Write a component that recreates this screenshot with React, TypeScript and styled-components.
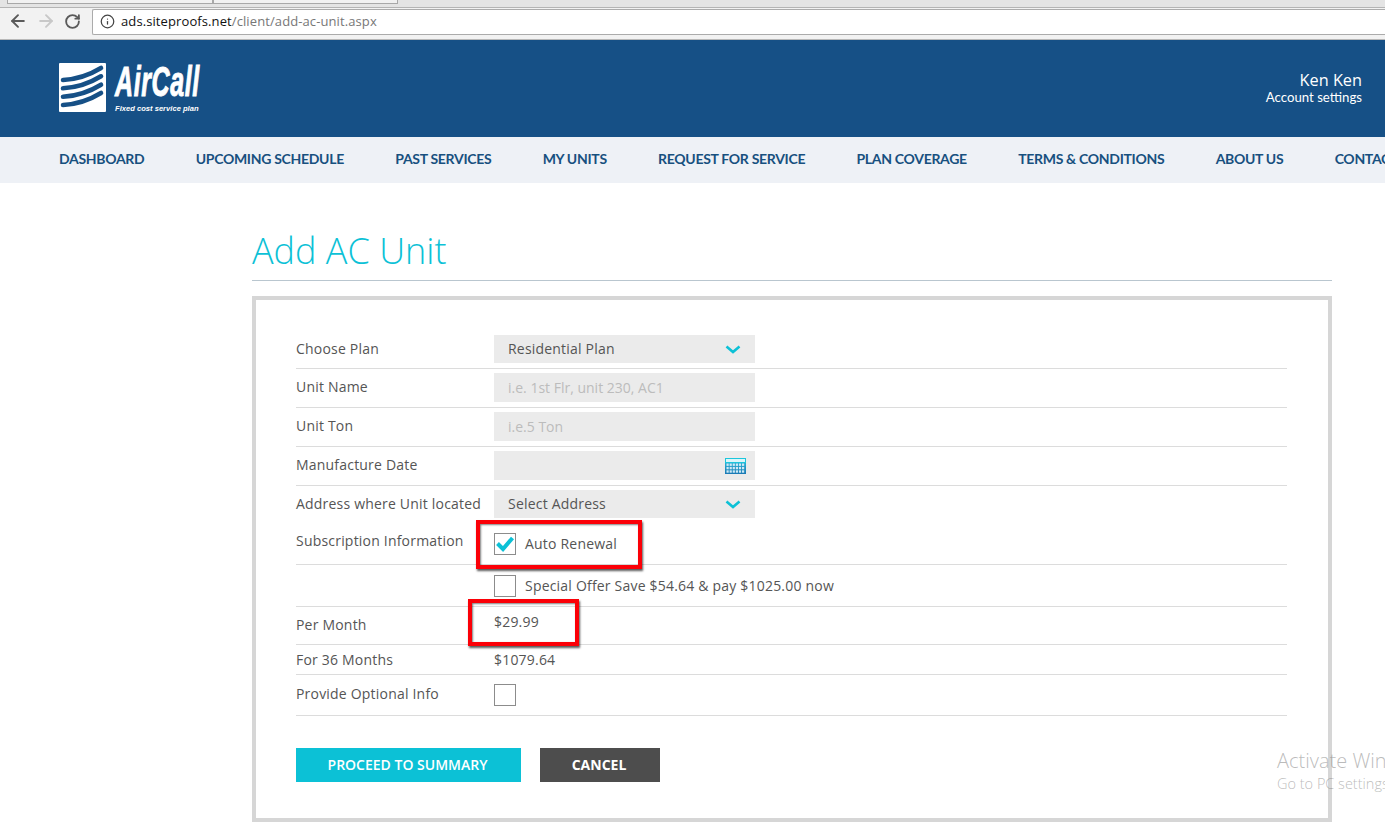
import styled, { createGlobalStyle } from "styled-components";
import { ArrowLeft, ArrowRight, RotateCw, Info } from "lucide-react";

const GlobalStyle = createGlobalStyle`
  html, body {
    margin: 0;
    padding: 0;
    background: #fff;
    overflow: hidden;
  }
  body {
    font-family: "Open Sans", sans-serif;
    color: #555;
  }
`;

const navItems = [
  "DASHBOARD",
  "UPCOMING SCHEDULE",
  "PAST SERVICES",
  "MY UNITS",
  "REQUEST FOR SERVICE",
  "PLAN COVERAGE",
  "TERMS & CONDITIONS",
  "ABOUT US",
  "CONTACT US",
];

const Chevron = () => (
  <svg width="16" height="9" viewBox="0 0 16 9">
    <path d="M1.5 1.5 L8 7 L14.5 1.5" fill="none" stroke="#0cc1d6" strokeWidth="2.6" />
  </svg>
);

const CalendarIcon = () => (
  <CalendarSvg viewBox="0 0 21 17">
    <defs>
      <linearGradient id="calGrid" x1="0" y1="0" x2="0" y2="1">
        <stop offset="0" stopColor="#27b4d6" />
        <stop offset="1" stopColor="#1a78b4" />
      </linearGradient>
    </defs>
    <rect x="0" y="5" width="21" height="12" fill="url(#calGrid)" />
    <rect x="0.5" y="1.5" width="20" height="4" fill="#dcf6fa" stroke="#1cc6dc" />
    {[0, 1, 2, 3, 4, 5].map((c) =>
      [0, 1, 2].map((r) => (
        <rect key={`${c}-${r}`} x={1.5 + c * 3.1} y={6.5 + r * 3.4} width="2.2" height="2.4" fill="#cfe9f5" />
      ))
    )}
  </CalendarSvg>
);

const App = () => {
  return (
    <Page>
      <GlobalStyle />
      <TabStrip>
        <Tab $w={204} />
        <Tab $w={183} />
      </TabStrip>
      <Toolbar>
        <NavIcons>
          <ArrowLeft size={20} color="#5a5a5a" strokeWidth={2.3} />
          <ArrowRight size={20} color="#c8c8c8" strokeWidth={2.3} />
          <RotateCw size={17} color="#5a5a5a" strokeWidth={2.6} />
        </NavIcons>
        <AddressBar>
          <Info size={15} color="#444" strokeWidth={2} />
          <Url>
            ads.siteproofs.net<UrlPath>/client/add-ac-unit.aspx</UrlPath>
          </Url>
        </AddressBar>
      </Toolbar>

      <Header>
        <Logo>
          <LogoMark viewBox="0 0 47 49">
            <rect width="47" height="49" rx="1" fill="#fff" />
            <path d="M4 17 Q24 16 42 5" fill="none" stroke="#165086" strokeWidth="4.6" strokeLinecap="round" />
            <path d="M4 25.3 Q24 24.3 42 13.3" fill="none" stroke="#165086" strokeWidth="4.6" strokeLinecap="round" />
            <path d="M4 33.7 Q24 32.7 42 21.7" fill="none" stroke="#165086" strokeWidth="4.6" strokeLinecap="round" />
            <path d="M4 42 Q24 41 42 30" fill="none" stroke="#165086" strokeWidth="4.6" strokeLinecap="round" />
          </LogoMark>
          <LogoText>
            <LogoName>AirCall</LogoName>
            <LogoTag>Fixed cost service plan</LogoTag>
          </LogoText>
        </Logo>
        <Account>
          <AccountName>Ken Ken</AccountName>
          <AccountLink>Account settings</AccountLink>
        </Account>
      </Header>

      <NavBar>
        {navItems.map((item) => (
          <NavItem key={item}>{item}</NavItem>
        ))}
      </NavBar>

      <Main>
        <Title>Add AC Unit</Title>
        <FormBox>
          <Row $pad="0 0 5px">
            <Label>Choose Plan</Label>
            <Field $h={28}>
              <FieldText>Residential Plan</FieldText>
              <Chevron />
            </Field>
          </Row>
          <Row $pad="4px 0 5px">
            <Label>Unit Name</Label>
            <Field $h={29}>
              <Placeholder>i.e. 1st Flr, unit 230, AC1</Placeholder>
            </Field>
          </Row>
          <Row $pad="4px 0 5px">
            <Label>Unit Ton</Label>
            <Field $h={29}>
              <Placeholder>i.e.5 Ton</Placeholder>
            </Field>
          </Row>
          <Row $pad="4px 0 5px">
            <Label>Manufacture Date</Label>
            <Field $h={29}>
              <span />
              <CalendarIcon />
            </Field>
          </Row>
          <Row $pad="4px 0 1px" $flat>
            <Label>Address where Unit located</Label>
            <Field $h={28}>
              <FieldText>Select Address</FieldText>
              <Chevron />
            </Field>
          </Row>
          <Row $pad="14px 0 9px">
            <Label $lift={8}>Subscription Information</Label>
            <CheckLine>
              <CheckBox>
                <svg width="18" height="16" viewBox="0 0 18 16">
                  <path d="M1.5 7.5 L7 13 L16.5 2" fill="none" stroke="#0cc1d6" strokeWidth="4" />
                </svg>
              </CheckBox>
              <FieldText>Auto Renewal</FieldText>
            </CheckLine>
          </Row>
          <Row $pad="10px 0 9px">
            <span />
            <CheckLine>
              <CheckBox />
              <FieldText>Special Offer Save $54.64 &amp; pay $1025.00 now</FieldText>
            </CheckLine>
          </Row>
          <Row $pad="0" $h={37}>
            <Label>Per Month</Label>
            <Label $lift={9}>$29.99</Label>
          </Row>
          <Row $pad="0" $h={29}>
            <Label $lift={0}>For 36 Months</Label>
            <Label $lift={0}>$1079.64</Label>
          </Row>
          <Row $pad="9px 0">
            <Label $lift={4}>Provide Optional Info</Label>
            <CheckLine>
              <CheckBox />
            </CheckLine>
          </Row>
          <Buttons>
            <PrimaryButton>PROCEED TO SUMMARY</PrimaryButton>
            <CancelButton>CANCEL</CancelButton>
          </Buttons>
        </FormBox>
      </Main>

      <Highlight $x={476} $y={520} $w={166} $h={49} />
      <Highlight $x={468} $y={599} $w={111} $h={47} />

      <Watermark>
        <WatermarkTitle>Activate Windows</WatermarkTitle>
        <WatermarkText>Go to PC settings to activate Windows.</WatermarkText>
      </Watermark>
    </Page>
  );
};

export default App;

const Page = styled.div`
  position: relative;
  width: 1385px;
  height: 828px;
  overflow: hidden;
`;

const TabStrip = styled.div`
  display: flex;
  height: 8px;
  padding-left: 7px;
  background: #e4e4e4;
  box-sizing: border-box;
  border-bottom: 1px solid #b4b4b4;
`;

const Tab = styled.div<{ $w: number }>`
  width: ${(p) => p.$w}px;
  height: 3px;
  background: #f1f1f1;
  border: 1px solid #a8a8a8;
  border-top: 0;
`;

const Toolbar = styled.div`
  display: flex;
  align-items: center;
  height: 32px;
  background: #f2f2f2;
  border-bottom: 1px solid #b8b8b8;
  box-sizing: border-box;
`;

const NavIcons = styled.div`
  display: flex;
  align-items: center;
  gap: 8px;
  width: 92px;
  margin-top: -5px;
  padding-left: 8px;
  box-sizing: border-box;
`;

const AddressBar = styled.div`
  flex: 1;
  display: flex;
  align-items: center;
  gap: 6px;
  height: 26px;
  padding-left: 7px;
  background: #fff;
  border: 1px solid #ababab;
  border-right: 0;
  border-radius: 2px 0 0 2px;
  box-sizing: border-box;
  margin-top: -4px;
`;

const Url = styled.div`
  font-family: "Open Sans", sans-serif;
  font-size: 13px;
  letter-spacing: 0.1px;
  margin-top: -2px;
  color: #111;
`;

const UrlPath = styled.span`
  color: #777;
`;

const Header = styled.div`
  display: flex;
  justify-content: space-between;
  align-items: flex-start;
  height: 97px;
  padding: 23px 23px 0 59px;
  background: #165086;
  box-sizing: border-box;
`;

const Logo = styled.div`
  display: flex;
  gap: 9px;
`;

const LogoMark = styled.svg`
  width: 47px;
  height: 49px;
`;

const LogoText = styled.div`
  display: flex;
  flex-direction: column;
  color: #fff;
`;

const LogoName = styled.div`
  font-family: "Liberation Sans", sans-serif;
  font-weight: 700;
  font-style: italic;
  font-size: 42px;
  line-height: 38px;
  letter-spacing: 1px;
  -webkit-text-stroke: 1px #fff;
  transform: scaleX(0.595);
  transform-origin: left center;
  height: 40px;
  width: 85px;
  white-space: nowrap;
`;

const LogoTag = styled.div`
  font-family: "Liberation Sans", sans-serif;
  font-weight: 700;
  font-style: italic;
  font-size: 7.6px;
  line-height: 11px;
  white-space: nowrap;
`;

const Account = styled.div`
  display: flex;
  flex-direction: column;
  align-items: flex-end;
  color: #fff;
  font-family: "Lato", sans-serif;
`;

const AccountName = styled.div`
  font-family: "Open Sans", sans-serif;
  font-size: 16.3px;
  line-height: 20px;
  margin-top: 7px;
`;

const AccountLink = styled.div`
  font-size: 13.2px;
  line-height: 15px;
`;

const NavBar = styled.div`
  display: flex;
  align-items: center;
  gap: 51.3px;
  height: 46px;
  padding: 0 0 4px 59px;
  background: #eef1f6;
  box-sizing: border-box;
  white-space: nowrap;
`;

const NavItem = styled.div`
  font-family: "Lato", sans-serif;
  font-weight: 700;
  font-size: 14px;
  letter-spacing: -0.3px;
  color: #17507f;
`;

const Main = styled.div`
  width: 1080px;
  margin-left: 252px;
`;

const Title = styled.h1`
  margin: 0 0 15px;
  height: 98px;
  padding-top: 44px;
  box-sizing: border-box;
  border-bottom: 1px solid #b9c6cf;
  font-family: "Open Sans", sans-serif;
  font-weight: 300;
  font-size: 36px;
  line-height: 47px;
  color: #0cc1d6;
`;

const FormBox = styled.div`
  height: 526px;
  padding: 35px 41px 0 40px;
  border: 4px solid #d6d6d6;
  box-sizing: border-box;
`;

const Row = styled.div<{ $pad: string; $flat?: boolean; $h?: number }>`
  display: grid;
  grid-template-columns: 198px 1fr;
  align-items: center;
  padding: ${(p) => p.$pad};
  ${(p) => (p.$h ? `height: ${p.$h}px;` : "")}
  border-bottom: ${(p) => (p.$flat ? "0" : "1px solid #dcdcdc")};
`;

const Label = styled.div<{ $lift?: number }>`
  font-size: 14px;
  letter-spacing: 0.2px;
  color: #555;
  white-space: nowrap;
  margin-top: ${(p) => -(p.$lift ?? 2)}px;
`;

const Field = styled.div<{ $h: number }>`
  display: flex;
  align-items: center;
  justify-content: space-between;
  width: 261px;
  height: ${(p) => p.$h}px;
  padding: 0 14px;
  background: #ebebeb;
  box-sizing: border-box;
  font-size: 14px;
`;

const FieldText = styled.span`
  font-size: 14px;
  letter-spacing: 0.2px;
  color: #555;
  margin-top: -2px;
`;

const Placeholder = styled.span`
  font-size: 14px;
  color: #bcbcbc;
`;

const CalendarSvg = styled.svg`
  width: 21px;
  height: 17px;
  margin-right: -5px;
`;

const CheckLine = styled.div`
  display: flex;
  align-items: center;
  gap: 9px;
`;

const CheckBox = styled.div`
  display: flex;
  align-items: center;
  justify-content: center;
  width: 22px;
  height: 22px;
  background: #fff;
  border: 1px solid #8c8c8c;
  box-sizing: border-box;
`;

const Buttons = styled.div`
  display: flex;
  gap: 19px;
  margin-top: 32px;
`;

const PrimaryButton = styled.button`
  width: 225px;
  height: 34px;
  padding: 0 2px 2px 0;
  border: 0;
  background: #0cc1d6;
  color: #fff;
  font-family: "Open Sans", sans-serif;
  font-weight: 600;
  font-size: 14px;
`;

const CancelButton = styled(PrimaryButton)`
  width: 120px;
  background: #4d4d4d;
  font-weight: 700;
`;

const Highlight = styled.div<{ $x: number; $y: number; $w: number; $h: number }>`
  position: absolute;
  left: ${(p) => p.$x}px;
  top: ${(p) => p.$y}px;
  width: ${(p) => p.$w}px;
  height: ${(p) => p.$h}px;
  border: 4px solid #fb0007;
  box-sizing: border-box;
  box-shadow: 1px 2px 2px rgba(0, 0, 0, 0.65), inset 1px 1px 2px rgba(0, 0, 0, 0.5);
`;

const Watermark = styled.div`
  position: absolute;
  left: 1277px;
  top: 748px;
  white-space: nowrap;
  font-family: "Open Sans", sans-serif;
  color: rgba(120, 120, 120, 0.5);
`;

const WatermarkTitle = styled.div`
  font-size: 20px;
  font-weight: 300;
  line-height: 25px;
`;

const WatermarkText = styled.div`
  font-size: 14.5px;
  font-weight: 300;
  line-height: 22px;
`;
